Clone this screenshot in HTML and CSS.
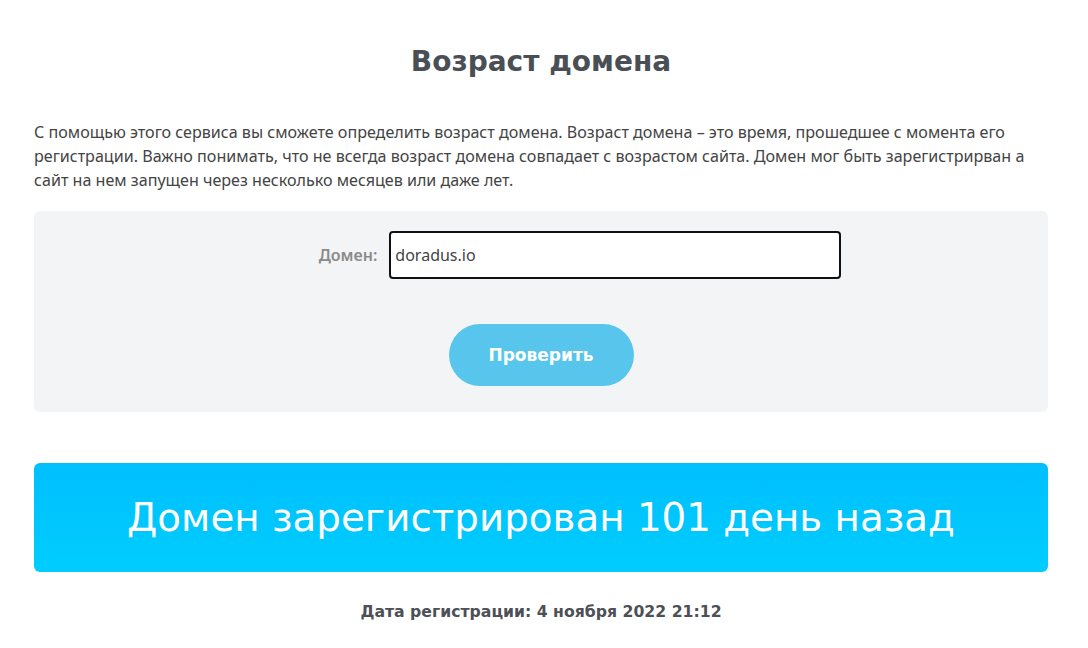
FILE: index.html
```html
<!DOCTYPE html>
<html lang="ru">
<head>
    <meta charset="UTF-8">
    <title>Возраст домена</title>
    <link rel="stylesheet" href="styles.css">
</head>
<body>
    <div class="page">
        <h1 class="title">Возраст домена</h1>
        <p class="intro">
            С помощью этого сервиса вы сможете определить возраст домена. Возраст домена – это время, прошедшее с момента его
            регистрации. Важно понимать, что не всегда возраст домена совпадает с возрастом сайта. Домен мог быть зарегистрирван а
            сайт на нем запущен через несколько месяцев или даже лет.
        </p>

        <form class="check-form" onsubmit="return false;">
            <div class="form-row">
                <label class="form-label" for="domain">Домен:</label>
                <input class="form-input" id="domain" type="text" value="doradus.io">
            </div>
            <button class="check-btn" type="submit">Проверить</button>
        </form>

        <div class="result">Домен зарегистрирован 101 день назад</div>
        <div class="reg-date">Дата регистрации: 4 ноября 2022 21:12</div>
    </div>
</body>
</html>
```

FILE: styles.css
```css
body {
    margin: 0;
    background-color: #fff;
    font-family: 'Noto Sans', sans-serif;
    color: #444;
}
.page {
    width: 1014px;
    margin: 0 0 0 34px;
    padding-top: 43px;
}
.title {
    margin: 0;
    text-align: center;
    font-family: 'DejaVu Sans', sans-serif;
    font-size: 28px;
    font-weight: bold;
    color: #4a4f56;
    line-height: 38px;
}
.intro {
    margin: 39px 0 0;
    font-size: 16.1px;
    line-height: 24px;
    color: #444;
}
.check-form {
    margin-top: 19px;
    background-color: #f3f4f6;
    border-radius: 6px;
    padding: 20px 0 26px;
    display: flex;
    flex-direction: column;
    align-items: center;
}
.form-row {
    display: flex;
    align-items: center;
    margin-left: 78px;
}
.form-label {
    font-size: 16px;
    font-weight: 600;
    color: #8a8a8a;
    margin-right: 12px;
}
.form-input {
    width: 452px;
    height: 48px;
    box-sizing: border-box;
    border: 2px solid #111;
    border-radius: 4px;
    padding: 0 4px;
    font-family: 'Noto Sans', sans-serif;
    font-size: 16px;
    color: #444;
    background: #fff;
    outline: none;
}
.check-btn {
    margin-top: 45px;
    width: 185px;
    height: 62px;
    border: none;
    border-radius: 31px;
    background-color: #57c5ec;
    color: #fff;
    font-family: 'DejaVu Sans', sans-serif;
    font-size: 17px;
    font-weight: bold;
    cursor: pointer;
}
.result {
    margin-top: 51px;
    height: 109px;
    border-radius: 6px;
    background: linear-gradient(to bottom, #00bffd, #00cdfe);
    color: #fff;
    font-family: 'DejaVu Sans', sans-serif;
    font-size: 38.8px;
    font-weight: normal;
    display: flex;
    align-items: center;
    justify-content: center;
}
.reg-date {
    margin-top: 30px;
    text-align: center;
    font-family: 'DejaVu Sans', sans-serif;
    font-size: 15.7px;
    font-weight: bold;
    color: #4d5055;
}
```
